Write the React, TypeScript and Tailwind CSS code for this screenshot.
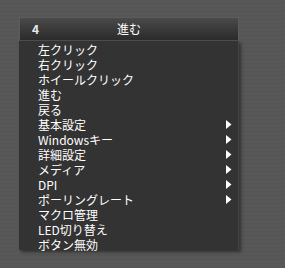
import React from "react";

const items: { label: React.ReactNode; sub?: boolean }[] = [
  { label: "左クリック" },
  { label: "右クリック" },
  { label: "ホイールクリック" },
  { label: "進む" },
  { label: "戻る" },
  { label: "基本設定", sub: true },
  { label: "Windowsキー", sub: true },
  { label: "詳細設定", sub: true },
  { label: "メディア", sub: true },
  { label: "DPI", sub: true },
  { label: "ポーリングレート", sub: true },
  { label: "マクロ管理" },
  { label: "LED切り替え" },
  { label: "ボタン無効" },
];

function Arrow() {
  return (
    <svg width="6" height="9" viewBox="0 0 6 9" className="block">
      <path d="M0 0 L5.5 4.5 L0 9 Z" fill="#ffffff" />
    </svg>
  );
}

export default function App() {
  return (
    <div
      className="w-[285px] h-[268px] overflow-hidden pt-[17px] pl-[19px] bg-[#575757] bg-[repeating-linear-gradient(180deg,#5a5a5a_0px,#545454_1px,#5c5c5c_2px,#515151_3px,#595959_4px)]"
      style={{ fontFamily: '"Noto Sans CJK JP", "Liberation Sans", sans-serif' }}
    >
      <div className="w-[220px]">
        <div className="h-[24px] border border-[#5c5c5c] border-b-[#4c4c4c] bg-gradient-to-b from-[#4a4a4a] to-[#2b2b2b] flex items-center relative">
          <span className="absolute left-[12px] text-[12px] font-bold text-[#e8e8f0] leading-[12px]">4</span>
          <span className="w-full text-center text-[12px] text-white leading-[12px]">進む</span>
        </div>
        <div className="h-[209px] bg-[#333333] border-r border-[#454545] shadow-[2px_2px_3px_rgba(0,0,0,0.45)] pt-[1px]">
          {items.map((it, i) => (
            <div key={i} className="h-[15px] flex items-center pl-[19px] pr-[6px] text-[12px] leading-[13px] text-white">
              <span className="flex-1 whitespace-nowrap">{it.label}</span>
              {it.sub && <Arrow />}
            </div>
          ))}
        </div>
      </div>
    </div>
  );
}
